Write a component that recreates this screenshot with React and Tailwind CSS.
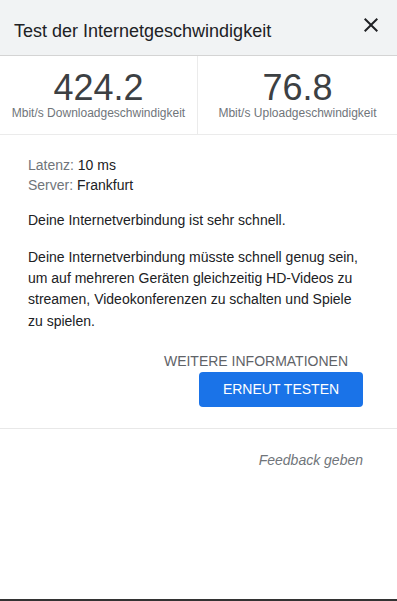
export default function App() {
  return (
    <div
      className="flex h-[601px] w-[397px] flex-col bg-white"
      style={{ fontFamily: '"Liberation Sans", Arial, sans-serif' }}
    >
      {/* Header */}
      <div className="flex h-[56px] shrink-0 items-start justify-between border-b border-[#d4d4d4] bg-[#f1f3f4]">
        <div className="pl-[14px] pt-[19px] text-[18px] leading-[24px] text-[#202124]">
          Test der Internetgeschwindigkeit
        </div>
        <button className="mr-[14px] mt-[13px] h-[24px] w-[24px] text-[#202124]">
          <svg viewBox="0 0 24 24" width="24" height="24" fill="currentColor">
            <path d="M19 6.41L17.59 5 12 10.59 6.41 5 5 6.41 10.59 12 5 17.59 6.41 19 12 13.41 17.59 19 19 17.59 13.41 12z" />
          </svg>
        </button>
      </div>

      {/* Stats */}
      <div className="grid shrink-0 grid-cols-[198px_1fr] border-b border-[#ebebeb]">
        <div className="flex flex-col items-center border-r border-[#ebebeb] pb-[13px] pt-[15px]">
          <div className="text-[36px] leading-[34px] text-[#3c4043]">424.2</div>
          <div className="text-[12px] leading-[16px] text-[#70757a]">
            Mbit/s Downloadgeschwindigkeit
          </div>
        </div>
        <div className="flex flex-col items-center pb-[13px] pt-[15px]">
          <div className="text-[36px] leading-[34px] text-[#3c4043]">76.8</div>
          <div className="text-[12px] leading-[16px] text-[#70757a]">
            Mbit/s Uploadgeschwindigkeit
          </div>
        </div>
      </div>

      {/* Content */}
      <div className="shrink-0 pl-[28px] pr-[34px] pt-[20px] text-[14px] text-[#202124]">
        <div className="leading-[20px]">
          <span className="text-[#70757a]">Latenz: </span>10 ms
        </div>
        <div className="leading-[20px]">
          <span className="text-[#70757a]">Server: </span>Frankfurt
        </div>
        <p className="mt-[14.5px] leading-[21.33px]">Deine Internetverbindung ist sehr schnell.</p>
        <p className="mt-[16px] leading-[21.33px]">
          Deine Internetverbindung müsste schnell genug sein, um auf mehreren Geräten gleichzeitig
          HD-Videos zu streamen, Videokonferenzen zu schalten und Spiele zu spielen.
        </p>
        <div className="mt-[18.5px] flex flex-col items-end">
          <button className="pr-[15px] text-[14px] leading-[20px] text-[#5f6368]">
            WEITERE INFORMATIONEN
          </button>
          <button className="mt-[1.5px] flex h-[35px] w-[164px] items-center justify-center rounded-[4px] bg-[#1a73e8] text-[14px] text-white">
            ERNEUT TESTEN
          </button>
        </div>
      </div>

      <div className="mt-[21px] h-px shrink-0 bg-[#e8e8e8]" />

      <div className="flex shrink-0 justify-end pr-[34px] pt-[21px]">
        <span className="text-[14px] italic leading-[20px] text-[#70757a]">Feedback geben</span>
      </div>

      <div className="flex-1" />
      <div className="h-[2px] shrink-0 bg-[#333333]" />
    </div>
  );
}
